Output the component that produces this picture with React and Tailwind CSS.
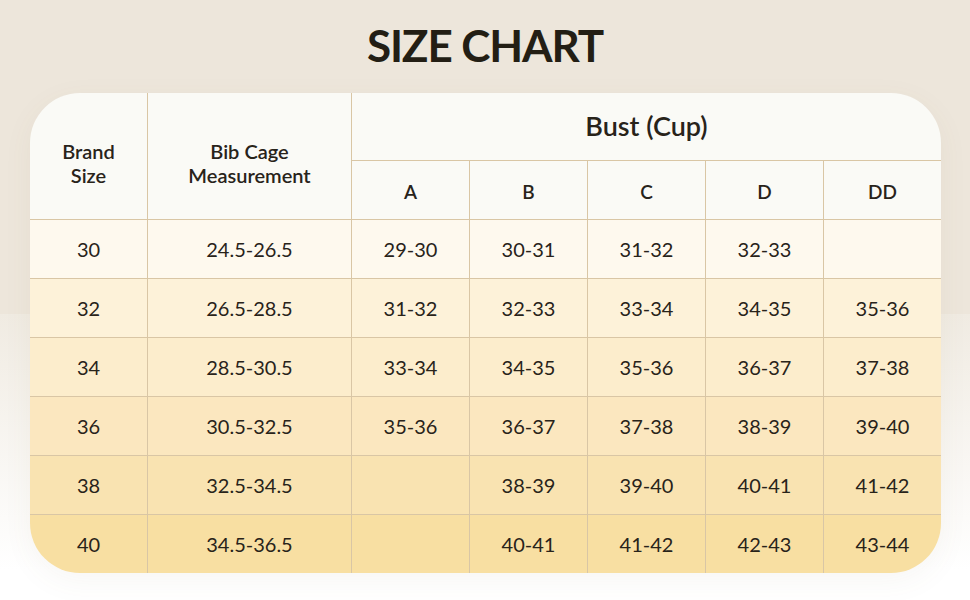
const cups = ['A', 'B', 'C', 'D', 'DD'];

const rows = [
    { size: '30', cage: '24.5-26.5', cups: ['29-30', '30-31', '31-32', '32-33', ''], bg: 'bg-[#fef9ee]' },
    { size: '32', cage: '26.5-28.5', cups: ['31-32', '32-33', '33-34', '34-35', '35-36'], bg: 'bg-[#fdf2d9]' },
    { size: '34', cage: '28.5-30.5', cups: ['33-34', '34-35', '35-36', '36-37', '37-38'], bg: 'bg-[#fcedcc]' },
    { size: '36', cage: '30.5-32.5', cups: ['35-36', '36-37', '37-38', '38-39', '39-40'], bg: 'bg-[#fbe7bf]' },
    { size: '38', cage: '32.5-34.5', cups: ['', '38-39', '39-40', '40-41', '41-42'], bg: 'bg-[#f9e3b1]' },
    { size: '40', cage: '34.5-36.5', cups: ['', '40-41', '41-42', '42-43', '43-44'], bg: 'bg-[#f8dfa2]' },
];

const line = 'border-[#d9c6a5]';

export default function App() {
    return (
        <div className="h-[600px] w-full overflow-hidden bg-[linear-gradient(to_bottom,#ede6db_0px,#ede6db_314px,#f0ebe2_314px,#ffffff_570px)] font-['Lato','Noto_Sans',sans-serif] text-[#28231a]">
            <h1 className="flex h-[93px] items-center justify-center pb-1 text-[44px] font-bold tracking-tight text-[#231e14]">
                SIZE CHART
            </h1>

            <div className="mx-[30px] grid w-[911px] grid-cols-[117px_204px_repeat(5,118px)] grid-rows-[67px_repeat(7,59px)] overflow-hidden rounded-[50px] bg-[#fafaf6] shadow-[0_8px_30px_rgba(120,100,60,0.06)]">
                <div className="row-span-2 flex flex-col items-center justify-center pt-[14px] text-center text-[20px] font-semibold leading-[24px]">
                    <span>Brand</span>
                    <span>Size</span>
                </div>
                <div className={`row-span-2 flex flex-col items-center justify-center border-l ${line} pt-[14px] text-center text-[20px] font-semibold leading-[24px]`}>
                    <span>Bib Cage</span>
                    <span>Measurement</span>
                </div>
                <div className={`col-span-5 flex items-center justify-center border-l ${line} text-[27px] font-semibold`}>
                    Bust (Cup)
                </div>
                {cups.map((c) => (
                    <div key={c} className={`flex items-center justify-center border-l border-t ${line} pt-1 text-[19px] font-semibold`}>
                        {c}
                    </div>
                ))}

                {rows.map((r) => (
                    <Row key={r.size} row={r} />
                ))}
            </div>
        </div>
    );
}

function Row({ row }) {
    const cell = `flex items-center justify-center border-t ${line} ${row.bg} text-[20px]`;
    return (
        <>
            <div className={cell}>{row.size}</div>
            <div className={`${cell} border-l`}>{row.cage}</div>
            {row.cups.map((v, i) => (
                <div key={i} className={`${cell} border-l`}>{v}</div>
            ))}
        </>
    );
}
